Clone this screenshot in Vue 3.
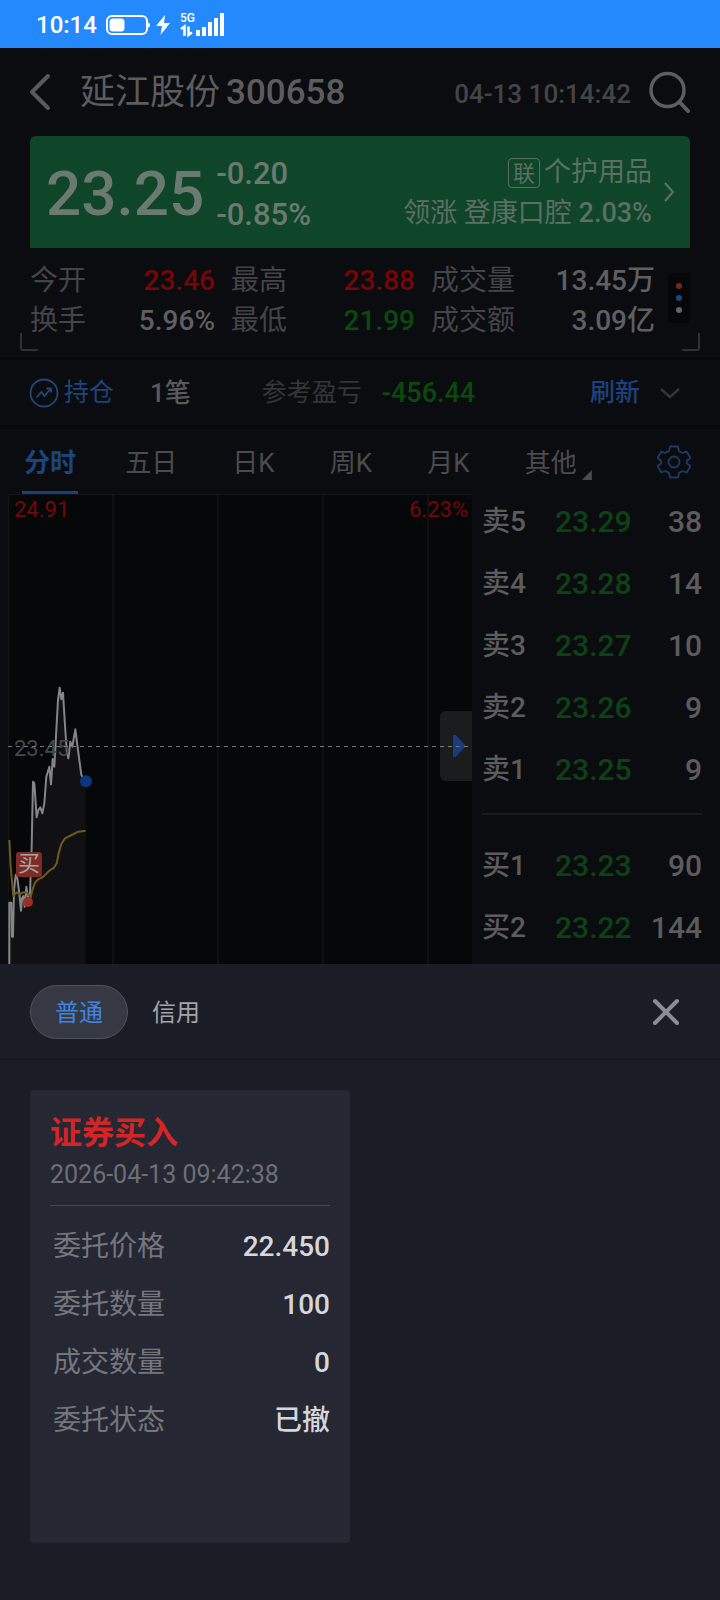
<script setup>
import { ref } from 'vue'

const stats = [
  [
    { label: '今开', value: '23.46', tone: 'up' },
    { label: '换手', value: '5.96%', tone: 'plain' },
  ],
  [
    { label: '最高', value: '23.88', tone: 'up' },
    { label: '最低', value: '21.99', tone: 'down' },
  ],
  [
    { label: '成交量', value: '13.45万', tone: 'plain' },
    { label: '成交额', value: '3.09亿', tone: 'plain' },
  ],
]

const periods = ['分时', '五日', '日K', '周K', '月K']
const period = ref('分时')

const asks = [
  ['卖5', '23.29', 38],
  ['卖4', '23.28', 14],
  ['卖3', '23.27', 10],
  ['卖2', '23.26', 9],
  ['卖1', '23.25', 9],
]
const bids = [
  ['买1', '23.23', 90],
  ['买2', '23.22', 144],
]

const accounts = ['普通', '信用']
const account = ref('普通')

const order = [
  ['委托价格', '22.450'],
  ['委托数量', '100'],
  ['成交数量', '0'],
  ['委托状态', '已撤'],
]
</script>

<template>
  <div class="page">
    <div class="status">
      <span class="clock">10:14</span>
      <svg class="battery" width="44" height="20" viewBox="0 0 44 20">
        <rect x="1" y="1" width="40" height="18" rx="5" fill="none" stroke="#fff" stroke-width="2" />
        <rect x="3.500" y="3.500" width="15" height="13" rx="3.500" fill="#fff" />
        <path d="M42 7.500q2 0 2 2.500t-2 2.500z" fill="#fff" />
      </svg>
      <svg class="bolt" width="14" height="20" viewBox="0 0 14 20">
        <path d="M9 0L0 11h6L4.500 20 14 8H8z" fill="#fff" />
      </svg>
      <div class="network">
        <span class="gen">5G</span>
        <svg width="44" height="24" viewBox="0 0 44 24">
          <path d="M1 16l3.500-2.500V23M8.500 13.500V22L12 19.500" fill="none" stroke="#fff" stroke-width="2.600" />
          <path d="M16 17h4v6h-4zM22 14h4v9h-4zM28 9h4v14h-4zM34 5h4v18h-4zM40 0h4v23h-4z" fill="#fff" />
        </svg>
      </div>
    </div>

    <header class="top">
      <button class="icon back" aria-label="返回">
        <svg width="22" height="38" viewBox="0 0 22 38">
          <path d="M19 3L3 19l16 16" fill="none" stroke="#59595b" stroke-width="4" stroke-linecap="round" stroke-linejoin="round" />
        </svg>
      </button>
      <h1><span>延江股份</span><span>300658</span></h1>
      <time>04-13 10:14:42</time>
      <button class="icon" aria-label="搜索">
        <svg width="42" height="42" viewBox="0 0 42 42">
          <circle cx="18.500" cy="19" r="16.500" fill="none" stroke="#5e5e60" stroke-width="3.500" />
          <path d="M30.500 31l8.500 9" fill="none" stroke="#5e5e60" stroke-width="4" stroke-linecap="round" />
        </svg>
      </button>
    </header>

    <section class="quote">
      <strong class="price">23.25</strong>
      <div class="change"><span>-0.20</span><span>-0.85%</span></div>
      <a class="sector" href="#sector">
        <span class="lines">
          <span class="line"><i class="badge">联</i>个护用品</span>
          <span class="line">领涨 登康口腔 <b>2.03%</b></span>
        </span>
        <svg width="12" height="22" viewBox="0 0 12 22">
          <path d="M2 2l8 9-8 9" fill="none" stroke="#617266" stroke-width="2" />
        </svg>
      </a>
    </section>

    <section class="stats">
      <dl v-for="(col, i) in stats" :key="i">
        <div v-for="s in col" :key="s.label">
          <dt>{{ s.label }}</dt>
          <dd :class="s.tone">{{ s.value }}</dd>
        </div>
      </dl>
      <button class="more" aria-label="更多指标"><i class="r"></i><i class="b"></i><i class="g"></i></button>
      <span class="corner left"></span>
      <span class="corner right"></span>
    </section>

    <section class="holding">
      <svg width="30" height="30" viewBox="0 0 30 30">
        <g fill="none" stroke="#224777" stroke-width="1.800">
          <circle cx="15" cy="15" r="13.500" />
          <path d="M7.500 19.500l5-5.500 3 4 6-7M17.500 10.500h4.500v4" />
        </g>
      </svg>
      <span class="hold">持仓</span>
      <span class="count">1笔</span>
      <span class="pl">参考盈亏</span>
      <span class="loss">-456.44</span>
      <button class="refresh">刷新</button>
      <button class="icon" aria-label="展开">
        <svg width="22" height="12" viewBox="0 0 22 12">
          <path d="M2 2l9 8 9-8" fill="none" stroke="#333437" stroke-width="2.500" />
        </svg>
      </button>
    </section>

    <nav class="tabs">
      <button v-for="p in periods" :key="p" class="tab" :class="{ on: p === period }" @click="period = p">{{ p }}</button>
      <button class="tab other">其他<i></i></button>
      <button class="icon gear" aria-label="设置">
        <svg width="34" height="34" viewBox="0 0 34 34">
          <g fill="none" stroke="#1b3b66" stroke-width="1.800" stroke-linejoin="round">
            <circle cx="17" cy="17" r="5.500" />
            <path d="M13 1.500h8l1 4.500 3.500 2 4.200-1.500 3.800 6.500-3.500 2.500v3l3.500 2.500-3.800 6.500-4.200-1.500-3.500 2-1 4.500h-8l-1-4.500-3.500-2-4.200 1.500-3.800-6.500L4 18.500v-3L.5 13l3.800-6.500L8.500 8 12 6z" />
          </g>
        </svg>
      </button>
    </nav>

    <main class="market">
      <div class="chart">
        <svg class="plot" viewBox="0 0 464 470" preserveAspectRatio="xMinYMin slice">
          <path d="M105 0v470M210 0v470M315 0v470M420 0v470" stroke="#131416" stroke-width="1.500" />
          <path d="M.5 470V.5H464" fill="none" stroke="#141517" />
          <g transform="translate(-8 166) scale(.33333)" fill="none" stroke-linejoin="round">
            <path d="M28 912V728h6l2 102h3l3-140 5-45 5 10 6 45 5 52 3-37 4-7 4 32 5-60 5 32 6-12 5-140 4-195 4 5 7 102 5-22 6-8 6 18 6-30 6-80 9-30 5 53 5-76 5 23 6-110 5-90 5-37 5 35 5-20 5 82 6 90 5 25 6-50 6 15 9-52 8 62 10 75 13 19v548z" fill="#111113" />
            <path d="M28 912V728h6l2 102h3l3-140 5-45 5 10 6 45 5 52 3-37 4-7 4 32 5-60 5 32 6-12 5-140 4-195 4 5 7 102 5-22 6-8 6 18 6-30 6-80 9-30 5 53 5-76 5 23 6-110 5-90 5-37 5 35 5-20 5 82 6 90 5 25 6-50 6 15 9-52 8 62 10 75 13 19" stroke="#858587" stroke-width="6" />
            <path d="M28 540l4 80 8 88 10-11 10 5 10-5 10 1 12 14 5-22 8-22 10-10 15-8 17-17 16-11 7-12 6-30 8-28 11-17 20-10 20-10 22-3" stroke="#6f5a20" stroke-width="6" />
            <circle cx="84" cy="726" r="15" fill="#9c2c26" />
            <circle cx="258" cy="364" r="18" fill="#0c3580" />
          </g>
        </svg>
        <span class="axis high">24.91</span>
        <span class="axis pct">6.23%</span>
        <span class="axis mid">23.45</span>
        <span class="buy">买</span>
        <button class="handle" aria-label="展开图表"></button>
        <span class="base"></span>
      </div>

      <div class="book">
        <table>
          <tbody>
            <tr v-for="r in asks" :key="r[0]"><th>{{ r[0] }}</th><td class="p">{{ r[1] }}</td><td>{{ r[2] }}</td></tr>
          </tbody>
        </table>
        <hr />
        <table>
          <tbody>
            <tr v-for="r in bids" :key="r[0]"><th>{{ r[0] }}</th><td class="p">{{ r[1] }}</td><td>{{ r[2] }}</td></tr>
          </tbody>
        </table>
      </div>
    </main>

    <section class="sheet">
      <div class="sheet-head">
        <button v-for="a in accounts" :key="a" class="pill" :class="{ on: a === account }" @click="account = a">{{ a }}</button>
        <button class="icon close" aria-label="关闭">
          <svg width="28" height="28" viewBox="0 0 28 28">
            <path d="M3 3l22 22M25 3L3 25" stroke="#8b8c98" stroke-width="4" stroke-linecap="round" />
          </svg>
        </button>
      </div>
      <article class="card">
        <h2>证券买入</h2>
        <time>2026-04-13 09:42:38</time>
        <dl>
          <div v-for="o in order" :key="o[0]"><dt>{{ o[0] }}</dt><dd>{{ o[1] }}</dd></div>
        </dl>
      </article>
    </section>
  </div>
</template>

<style>
body {
  background: #1b1d26;
}
</style>

<style scoped>
.page {
  min-height: 100vh;
  display: flex;
  flex-direction: column;
  background: #0b0c10;
  color: #5c5c5e;
  font-family: Roboto, "Noto Sans CJK SC", sans-serif;
  font-size: 28px;
  line-height: 40px;
  white-space: nowrap;
}
.page * {
  box-sizing: border-box;
}
button {
  border: 0;
  padding: 0;
  background: none;
  color: inherit;
  font: inherit;
  cursor: pointer;
}
svg {
  display: block;
  flex: none;
}
i {
  font-style: normal;
}
dl,
dd,
h1,
h2 {
  margin: 0;
}
.icon {
  display: flex;
  align-items: center;
  justify-content: center;
}

.status {
  height: 48px;
  padding: 2px 36px 0;
  display: flex;
  align-items: center;
  background: #2489fc;
  color: #fff;
}
.clock {
  font-size: 24px;
  font-weight: 500;
}
.battery {
  margin-left: 9px;
}
.bolt {
  margin-left: 6px;
}
.network {
  position: relative;
  margin-left: 10px;
}
.gen {
  position: absolute;
  left: 0;
  top: -1px;
  font-size: 12px;
  line-height: 12px;
  font-weight: 500;
}

.top {
  height: 88px;
  padding: 0 29px;
  display: flex;
  align-items: center;
}
.top h1 {
  margin-left: 29px;
  margin-right: auto;
  padding-top: 2px;
  display: flex;
  gap: 6px;
  font-size: 35px;
  font-weight: 500;
}
.top h1 span:first-child {
  font-weight: 400;
}
.top time {
  margin-right: 18px;
  padding-top: 3px;
  color: #434447;
  font-size: 26px;
  font-weight: 500;
}

.quote {
  height: 112px;
  margin: 0 30px;
  padding: 0 15px 0 16px;
  display: flex;
  align-items: center;
  border-radius: 6px 6px 0 0;
  background: #0f4529;
  color: #6b7a70;
}
.price {
  padding-top: 4px;
  font-size: 62px;
  line-height: 108px;
  font-weight: 500;
}
.change {
  display: flex;
  flex-direction: column;
  margin-left: 12px;
  padding-top: 3px;
  font-size: 31px;
  font-weight: 500;
  line-height: 41px;
}
.sector {
  margin-left: auto;
  display: flex;
  align-items: center;
  gap: 11px;
  color: #5b6f62;
  font-size: 27px;
  text-decoration: none;
}
.lines {
  display: flex;
  flex-direction: column;
  align-items: flex-end;
  padding-top: 2px;
}
.line {
  display: flex;
  align-items: center;
  white-space: pre;
  line-height: 41px;
}
.line b {
  font-weight: 500;
}
.badge {
  width: 32px;
  height: 30px;
  margin-right: 4px;
  border: 1px solid #5b6f62;
  border-radius: 4px;
  font-size: 22px;
  line-height: 29px;
  text-align: center;
}

.stats {
  position: relative;
  height: 111px;
  padding: 13px 30px 0;
  display: grid;
  grid-template-columns: 185fr 184fr 224fr 19px;
  column-gap: 16px;
  align-items: start;
  border-bottom: 1px solid #060709;
}
.stats dl div {
  display: flex;
  justify-content: space-between;
}
.stats dt {
  color: #434447;
}
.stats dd {
  font-weight: 500;
}
.stats dd.plain {
  color: #5f5f61;
}
.stats dd.up {
  color: #760607;
}
.stats dd.down {
  color: #0b4a0f;
}
.more {
  width: 22px;
  height: 50px;
  margin-top: 12px;
  margin-left: -3px;
  display: flex;
  flex-direction: column;
  align-items: center;
  justify-content: center;
  gap: 6px;
  background: #060709;
}
.more i {
  width: 6px;
  height: 6px;
  border-radius: 50%;
}
.more .r {
  background: #78281e;
}
.more .b {
  background: #1d4785;
}
.more .g {
  background: #626264;
}
.corner {
  position: absolute;
  bottom: 7px;
  width: 18px;
  height: 18px;
  border-bottom: 2px solid #303134;
}
.corner.left {
  left: 20px;
  border-left: 2px solid #303134;
  border-bottom-left-radius: 3px;
}
.corner.right {
  right: 20px;
  border-right: 2px solid #303134;
  border-bottom-right-radius: 3px;
}

.holding {
  height: 66px;
  padding: 2px 39px 0 29px;
  display: flex;
  align-items: center;
  font-size: 25px;
}
.hold {
  margin-left: 5px;
  color: #1d447c;
}
.count {
  margin-left: 36px;
  color: #59595b;
  font-size: 26px;
  font-weight: 500;
}
.pl {
  margin-left: 71px;
  color: #343538;
}
.loss {
  margin-left: 20px;
  color: #0b4a0f;
  font-size: 27px;
  font-weight: 500;
}
.refresh {
  margin-left: auto;
  margin-right: 19px;
  color: #1c427c;
  font-weight: 500;
}

.tabs {
  height: 69px;
  padding: 0 29px 0 22px;
  display: flex;
  align-items: center;
  justify-content: space-between;
  border-top: 4px solid #07080a;
  color: #4a4b4d;
  font-size: 26px;
}
.tab {
  height: 65px;
  padding-top: 3px;
  border-bottom: 3px solid transparent;
  border-top: 3px solid transparent;
}
.tab:first-child {
  width: 56px;
  margin-right: -8px;
}
.tab.on {
  border-bottom-color: #1c3f7b;
  color: #1c447f;
  font-weight: 700;
}
.gear {
  margin-left: 10px;
}
.other {
  display: flex;
  align-items: center;
  gap: 5px;
}
.other i {
  width: 10px;
  height: 10px;
  margin-top: 24px;
  background: #4a4b4d;
  clip-path: polygon(100% 0, 100% 100%, 0 100%);
}

.market {
  display: grid;
  grid-template-columns: 464fr 220fr;
  column-gap: 10px;
  padding: 0 18px 0 8px;
}
.chart {
  position: relative;
  height: 470px;
  background: #060709;
  overflow: hidden;
}
.plot {
  width: 100%;
  height: 100%;
}
.axis {
  position: absolute;
  left: 6px;
  font-size: 22px;
  line-height: 24px;
  color: #464749;
}
.axis.high {
  top: 4px;
  color: #760607;
}
.axis.pct {
  top: 4px;
  left: auto;
  right: 4px;
  color: #760607;
}
.axis.mid {
  top: 243px;
}
.base {
  position: absolute;
  left: 0;
  right: 0;
  top: 252px;
  height: 1px;
  background: repeating-linear-gradient(90deg, #77787a 0 4px, transparent 4px 8px);
}
.buy {
  position: absolute;
  left: 8px;
  top: 358px;
  width: 26px;
  height: 25px;
  border-radius: 3px;
  background: #7e2a26;
  color: #a5a3a3;
  font-size: 22px;
  line-height: 24px;
  text-align: center;
}
.handle {
  position: absolute;
  right: 0;
  top: 217px;
  width: 32px;
  height: 70px;
  border-radius: 6px 0 0 6px;
  background: #1b1c1e;
}
.handle::after {
  content: "";
  display: block;
  width: 13px;
  height: 22px;
  margin-left: 13px;
  background: #1a3c7c;
  clip-path: polygon(0 0, 20% 0, 100% 50%, 20% 100%, 0 100%);
}
.book table {
  width: 100%;
  table-layout: fixed;
  border-collapse: collapse;
}
.book tr {
  height: 62px;
}
.book th,
.book td {
  padding: 0;
  font-weight: 500;
  text-align: right;
  font-size: 30px;
}
.book table:first-child {
  margin-top: -3px;
}
.book th {
  width: 24%;
  text-align: left;
  font-size: 28px;
}
.book .p {
  width: 44%;
  color: #0b4314;
}
.book hr {
  height: 2px;
  margin: 12px 0 20px;
  border: 0;
  background: #1a1b1e;
}

.sheet {
  flex: 1;
  background: #1b1d26;
}
.sheet-head {
  height: 96px;
  padding: 2px 40px 0 30px;
  display: flex;
  align-items: center;
  border-bottom: 2px solid #171922;
}
.pill {
  height: 54px;
  padding: 2px 24px 0;
  border-radius: 27px;
  color: #a3a4aa;
  font-size: 24px;
}
.pill.on {
  border: 1px solid #50515c;
  background: #363844;
  color: #3e84e0;
}
.close {
  margin-left: auto;
}
.card {
  width: 320px;
  min-height: 453px;
  margin: 30px;
  padding: 21px 20px 20px;
  border-radius: 4px;
  background: #252733;
}
.card h2 {
  color: #d32426;
  font-size: 32px;
  line-height: 44px;
  font-weight: 700;
}
.card time {
  display: block;
  padding-bottom: 10px;
  border-bottom: 1px solid #45464f;
  color: #6d6e76;
  font-size: 25px;
}
.card dl {
  padding: 12px 0 0 3px;
}
.card dl div {
  display: flex;
  justify-content: space-between;
  line-height: 58px;
}
.card dt {
  color: #75767c;
}
.card dd {
  color: #d6d6dc;
  font-weight: 500;
}
</style>
